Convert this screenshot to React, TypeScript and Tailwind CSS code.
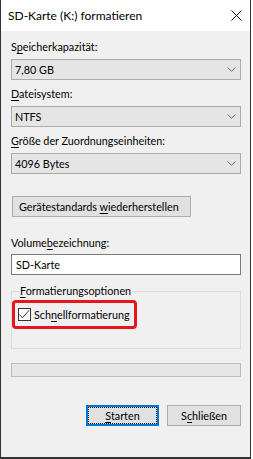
import type { ReactNode } from 'react';

function Key({ children }: { children: ReactNode }) {
  return <span className="underline underline-offset-[2px] decoration-1">{children}</span>;
}

function Chevron() {
  return (
    <svg width="9" height="5" viewBox="0 0 9 5" fill="none">
      <path d="M0.5 0.5 L4.5 4.2 L8.5 0.5" stroke="#707070" strokeWidth="1" />
    </svg>
  );
}

function Dropdown({ value }: { value: string }) {
  return (
    <div className="mt-[4px] h-[21px] border border-[#acacac] bg-[#e5e5e5] flex items-center justify-between pl-[3px] pr-[4px]">
      <span className="leading-[16px]">{value}</span>
      <Chevron />
    </div>
  );
}

function Label({ children, className = '' }: { children: ReactNode; className?: string }) {
  return <div className={`h-[16px] leading-[16px] ${className}`}>{children}</div>;
}

export default function App() {
  return (
    <div className="w-[253px] h-[459px] bg-white font-['Lato',sans-serif] text-[10.8px] text-black whitespace-nowrap">
      <div className="w-[251px] h-[459px] border-l border-r border-b-2 border-[#333333] flex flex-col">
        {/* title bar */}
        <div className="h-[31px] bg-white flex items-center justify-between pl-[7px] pr-[8px]">
          <span className="leading-[16px] text-[12px]">SD-Karte (K:) formatieren</span>
          <svg width="11" height="11" viewBox="0 0 11 11">
            <path d="M0.5 0.5 L10.5 10.5 M10.5 0.5 L0.5 10.5" stroke="#111" strokeWidth="1" />
          </svg>
        </div>

        <div className="flex-1 bg-[#f0f0f0] pt-[8px] pl-[10px] pr-[9px]">
          <Label>
            S<Key>p</Key>eicherkapazität:
          </Label>
          <Dropdown value="7,80 GB" />

          <Label className="mt-[6px]">
            <Key>D</Key>ateisystem:
          </Label>
          <Dropdown value="NTFS" />

          <Label className="mt-[6px]">
            <Key>G</Key>röße der Zuordnungseinheiten:
          </Label>
          <Dropdown value="4096 Bytes" />

          <div className="mt-[22px] ml-[1px] w-[179px] h-[21px] border border-[#adadad] bg-[#e1e1e1] flex items-center pl-[6px]">
            <span className="leading-[16px]">
              Gerätestandards <Key>w</Key>iederherstellen
            </span>
          </div>

          <Label className="mt-[18px]">
            Volume<Key>b</Key>ezeichnung:
          </Label>
          <div className="mt-[3px] h-[21px] border border-[#7a7a7a] bg-white flex items-center pl-[4px]">
            <span className="leading-[16px]">SD-Karte</span>
          </div>

          {/* group box */}
          <div className="mt-[16px] h-[58px] border border-[#dcdcdc]">
            <div className="-mt-[9px] ml-[7px] px-[1px] w-fit bg-[#f0f0f0] leading-[16px]">
              <Key>F</Key>ormatierungsoptionen
            </div>
            <div className="mt-[1px] w-[125px] h-[29px] border-[3px] border-[#e8161b] rounded-[4px] flex items-center pl-[3px]">
              <div className="w-[13px] h-[13px] border border-[#333333] bg-white">
                <svg width="11" height="11" viewBox="0 0 11 11" fill="none">
                  <path d="M0.5 5.5 L3.5 8.8 L10.2 1.2" stroke="#333" strokeWidth="1" />
                </svg>
              </div>
              <span className="ml-[3px] leading-[16px]">
                Sch<Key>n</Key>ellformatierung
              </span>
            </div>
          </div>

          {/* progress */}
          <div className="mt-[14px] h-[14px] border border-[#bcbcbc] bg-[#e6e6e6]" />

          <div className="mt-[28px] flex justify-end gap-[8px]">
            <div className="w-[73px] h-[21px] border-2 border-[#0078d7] bg-[#e1e1e1]">
              <div className="w-full h-full border border-dotted border-black flex items-center justify-center">
                <span className="leading-[16px]">
                  <Key>S</Key>tarten
                </span>
              </div>
            </div>
            <div className="w-[74px] h-[21px] border border-[#adadad] bg-[#e1e1e1] flex items-center justify-center">
              <span className="leading-[16px]">
                S<Key>c</Key>hließen
              </span>
            </div>
          </div>
        </div>
      </div>
    </div>
  );
}
